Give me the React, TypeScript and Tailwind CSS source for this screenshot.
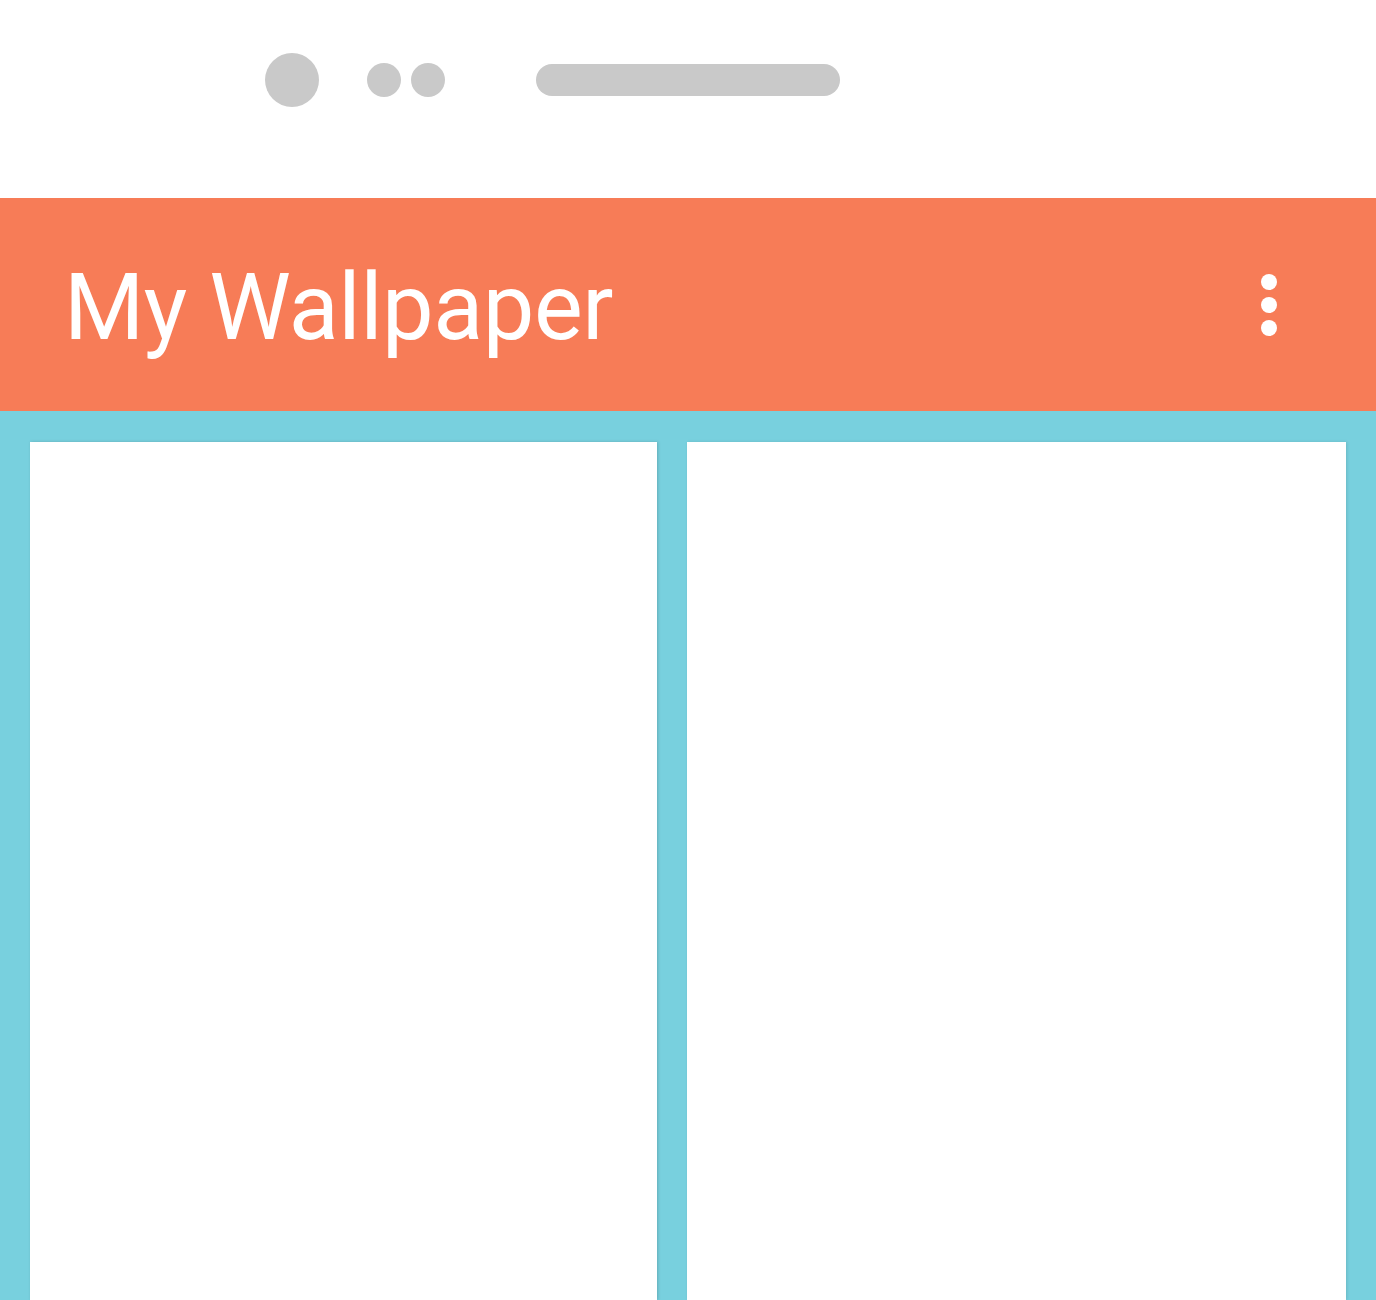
import React from "react";

export default function App() {
  return (
    <div className="w-[1376px] h-[1300px] overflow-hidden bg-white flex flex-col" style={{ fontFamily: "Roboto, 'Noto Sans', sans-serif" }}>
      {/* status bar */}
      <div className="h-[198px] shrink-0">
        <div className="h-[160px] flex items-center pl-[265px]">
          <div className="w-[54px] h-[54px] rounded-full bg-[#c9c9c9]" />
          <div className="ml-[48px] w-[34px] h-[34px] rounded-full bg-[#c9c9c9]" />
          <div className="ml-[10px] w-[34px] h-[34px] rounded-full bg-[#c9c9c9]" />
          <div className="ml-[91px] w-[304px] h-[32px] rounded-full bg-[#c9c9c9]" />
        </div>
      </div>
      {/* app bar */}
      <div className="h-[213px] shrink-0 bg-[#f77c57] flex items-start justify-between pl-[64px] pr-[99px]">
        <div className="mt-[64px] text-[92px] leading-none text-white font-normal tracking-[-0.5px]">My Wallpaper</div>
        <div className="mt-[76px] flex flex-col gap-[7px]">
          <div className="w-[16px] h-[16px] rounded-full bg-white" />
          <div className="w-[16px] h-[16px] rounded-full bg-white" />
          <div className="w-[16px] h-[16px] rounded-full bg-white" />
        </div>
      </div>
      {/* content */}
      <div className="flex-1 bg-[#78d0de] flex pt-[31px] pl-[30px] pr-[30px] gap-[30px]">
        <div className="w-[627px] bg-white shadow-[1px_0_3px_rgba(0,0,0,0.18)]" />
        <div className="w-[659px] bg-white shadow-[1px_0_3px_rgba(0,0,0,0.12)]" />
      </div>
    </div>
  );
}
